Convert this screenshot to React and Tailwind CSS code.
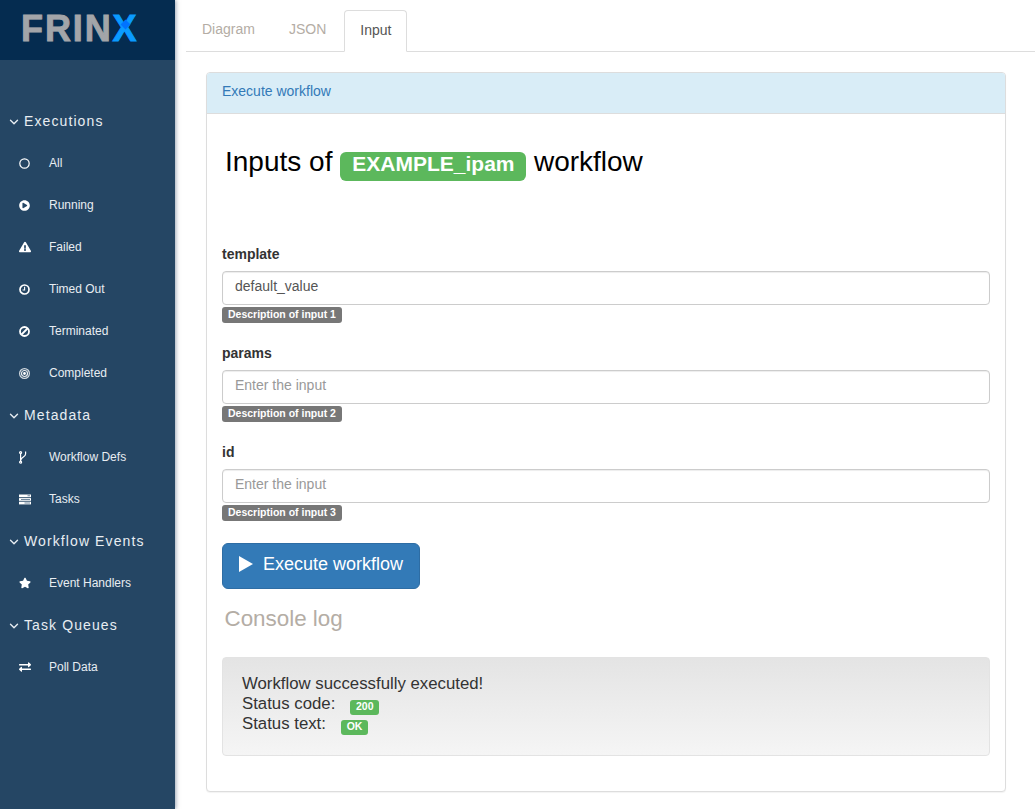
import React from 'react';
import { ChevronDown } from 'lucide-react';
import { FaPlayCircle, FaExclamationTriangle, FaStar, FaExchangeAlt } from 'react-icons/fa';

const CircleIcon = () => (
    <svg width="11" height="11" viewBox="0 0 11 11" fill="none" stroke="currentColor" strokeWidth="1.2">
        <circle cx="5.5" cy="5.5" r="4.7" />
    </svg>
);

const ClockIcon = () => (
    <svg width="11" height="11" viewBox="0 0 11 11" fill="none" stroke="currentColor" strokeWidth="1.7">
        <circle cx="5.5" cy="5.5" r="4.5" />
        <path d="M5.6 2.8V6H3.6" strokeWidth="1.1" />
    </svg>
);

const BanIcon = () => (
    <svg width="11" height="11" viewBox="0 0 11 11" fill="none" stroke="currentColor" strokeWidth="1.8">
        <circle cx="5.5" cy="5.5" r="4.5" />
        <path d="M2.5 8.5L8.5 2.5" />
    </svg>
);

const TargetIcon = () => (
    <svg width="11" height="11" viewBox="0 0 11 11" fill="none" stroke="currentColor">
        <circle cx="5.5" cy="5.5" r="4.9" strokeWidth="1.2" opacity="0.8" />
        <circle cx="5.5" cy="5.5" r="3" strokeWidth="1.2" opacity="0.9" />
        <circle cx="5.5" cy="5.5" r="1.4" fill="currentColor" strokeWidth="0" />
    </svg>
);

const BranchIcon = () => (
    <svg width="8" height="13" viewBox="0 0 8 13" fill="none" stroke="currentColor" strokeWidth="1.2">
        <circle cx="1.6" cy="1.6" r="1" />
        <circle cx="1.6" cy="11.2" r="1" />
        <path d="M1.6 2.6V10.2M6.6 0.6V3C6.6 6 2.6 6 1.8 9" />
    </svg>
);

const TasksIcon = () => (
    <svg width="12" height="11" viewBox="0 0 12 11" fill="currentColor">
        <path d="M0 0.5H12V3.2H0Z" />
        <path d="M0 4.1H12V6.8H0Z" />
        <path d="M0 7.7H12V10.4H0Z" />
        <path d="M8.5 1.3H11V2.3H8.5ZM2 4.9H11V5.9H2ZM5.5 8.5H11V9.5H5.5Z" fill="#24486a" opacity="0.65" />
    </svg>
);

const PlayTriangle = () => (
    <svg width="14" height="16" viewBox="0 0 14 16" fill="currentColor" className="-mt-[1px]">
        <path d="M0 0L14 8L0 16Z" />
    </svg>
);

const NavSection = ({ title }) => (
    <div className="h-[42px] flex items-center pl-[7px] text-[14px] tracking-[1.1px] text-[#e8edf2]">
        <ChevronDown size={14} strokeWidth={2.4} className="mr-[3px] mt-[1px]" />
        <span>{title}</span>
    </div>
);

const NavItem = ({ icon, label }) => (
    <div className="h-[42px] flex items-center text-[12px] text-[#e8edf2]">
        <span className="w-[49px] pl-[19px] flex items-center text-white">{icon}</span>
        <span>{label}</span>
    </div>
);

const Sidebar = () => (
    <aside className="w-[175px] shrink-0 bg-[#254664] shadow-[1px_0_4px_rgba(60,80,110,0.5)] z-10">
        <div className="h-[60px] bg-[#052c50] pl-[21px] pt-[6px] text-[36px] leading-[46px] font-bold tracking-[1.9px] text-[#a3a5a9] [-webkit-text-stroke:0.9px_currentColor]">
            FRIN<span className="relative text-[#0a9bff]">X<span className="absolute left-[9px] top-[13px] w-[7px] h-[7px] rotate-45 bg-[#0073ff]" /></span>
        </div>
        <nav className="pt-[40px]">
            <NavSection title="Executions" />
            <NavItem icon={<CircleIcon />} label="All" />
            <NavItem icon={<FaPlayCircle size={11} />} label="Running" />
            <NavItem icon={<FaExclamationTriangle size={12} />} label="Failed" />
            <NavItem icon={<ClockIcon />} label="Timed Out" />
            <NavItem icon={<BanIcon />} label="Terminated" />
            <NavItem icon={<TargetIcon />} label="Completed" />
            <NavSection title="Metadata" />
            <NavItem icon={<BranchIcon />} label="Workflow Defs" />
            <NavItem icon={<TasksIcon />} label="Tasks" />
            <NavSection title="Workflow Events" />
            <NavItem icon={<FaStar size={12} />} label="Event Handlers" />
            <NavSection title="Task Queues" />
            <NavItem icon={<FaExchangeAlt size={12} />} label="Poll Data" />
        </nav>
    </aside>
);

const Tabs = () => (
    <div className="ml-[11px] pt-[10px] flex gap-[2px] border-b border-[#dddddd] h-[41px] box-content">
        <div className="px-[16px] h-[41px] leading-[39px] text-[#b4ada5]">Diagram</div>
        <div className="px-[16px] h-[41px] leading-[39px] text-[#b4ada5]">JSON</div>
        <div className="px-[15px] h-[42px] leading-[39px] text-[#555555] bg-white border border-[#dddddd] border-b-white rounded-t-[4px]">Input</div>
    </div>
);

const Badge = ({ children }) => (
    <span className="inline-block bg-[#777777] text-white text-[10.5px] font-bold leading-[14px] h-[16px] px-[6px] rounded-[3px] align-top">
        {children}
    </span>
);

const Field = ({ label, value, description }) => (
    <div className="h-[99px]">
        <label className="block text-[14px] font-bold leading-[20px] text-[#333333] mb-[7px]">{label}</label>
        <input
            readOnly
            value={value}
            placeholder="Enter the input"
            className="block w-full h-[34px] px-[12px] pb-[4px] text-[14px] text-[#555555] placeholder:text-[#999999] bg-white border border-[#cccccc] rounded-[4px] shadow-[inset_0_1px_1px_rgba(0,0,0,0.075)] outline-none"
        />
        <div className="mt-[2px] h-[16px]">
            <Badge>{description}</Badge>
        </div>
    </div>
);

const SuccessLabel = ({ children, className }) => (
    <span className={`inline-block bg-[#5cb85c] text-white text-[10.5px] font-bold leading-[13px] h-[15px] px-[6px] rounded-[3px] align-[-1px] ${className}`}>
        {children}
    </span>
);

const ExecutePanel = () => (
    <div className="ml-[31px] mr-[29px] mt-[20px] h-[720px] border border-[#dddddd] rounded-[4px] shadow-[0_1px_1px_rgba(0,0,0,0.05)] bg-white">
        <div className="h-[41px] px-[15px] bg-[#d9edf7] border-b border-[#dddddd] rounded-t-[3px] text-[14px] leading-[36px] text-[#337ab7]">
            Execute workflow
        </div>
        <div className="px-[15px]">
            <h2 className="ml-[3px] mt-[28px] h-[40px] text-[28px] leading-[40px] text-black flex items-center">
                <span>Inputs of</span>
                <span className="ml-[8px] mt-[9px] w-[186px] h-[29px] bg-[#5cb85c] text-white text-[21px] font-bold leading-[24px] text-center rounded-[6px]">EXAMPLE_ipam</span>
                <span className="ml-[7.5px]">workflow</span>
            </h2>
            <div className="mt-[62px]">
                <Field label="template" value="default_value" description="Description of input 1" />
                <Field label="params" value="" description="Description of input 2" />
                <Field label="id" value="" description="Description of input 3" />
            </div>
            <button className="mt-[2px] block w-[198px] h-[46px] bg-[#337ab7] border border-[#2e6da4] rounded-[6px] text-white text-[18px]">
                <span className="flex items-center justify-center gap-[10px] pb-[3px]">
                    <PlayTriangle />
                    Execute workflow
                </span>
            </button>
            <h3 className="ml-[2.5px] mt-[15px] text-[22.4px] leading-[30px] text-[#b4ada5]">Console log</h3>
            <div className="mt-[23px] h-[99px] px-[19px] pt-[16px] border border-[#e3e3e3] rounded-[4px] bg-gradient-to-b from-[#e4e4e4] to-[#f5f5f5] text-[16.8px] leading-[20px] text-[#333333]">
                <div className="h-[20px]">Workflow successfully executed!</div>
                <div className="h-[20px]">Status code: <SuccessLabel className="ml-[10px]">200</SuccessLabel></div>
                <div className="h-[20px]">Status text: <SuccessLabel className="ml-[10px]">OK</SuccessLabel></div>
            </div>
        </div>
    </div>
);

const App = () => (
    <div className="flex w-[1035px] h-[809px] overflow-hidden bg-white text-[14px] font-['Liberation_Sans',Arial,sans-serif]">
        <Sidebar />
        <main className="flex-1 min-w-0">
            <Tabs />
            <ExecutePanel />
        </main>
    </div>
);

export default App;
